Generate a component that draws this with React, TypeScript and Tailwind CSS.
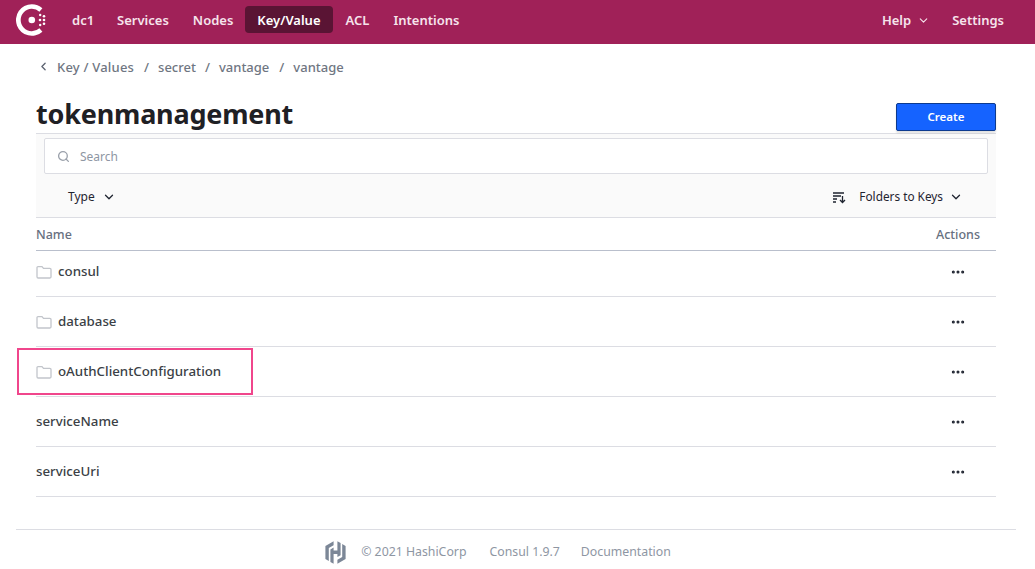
import { ChevronDown, ChevronLeft, Ellipsis, Search } from "lucide-react";

const font = { fontFamily: '"Noto Sans", "Open Sans", sans-serif' };

function ConsulLogo() {
    return (
        <svg width="33" height="32" viewBox="0 0 33 32" fill="#fff">
            <path d="M15.8 0.2a15.8 15.8 0 0 1 10.6 4.1l-3 3.4a11.2 11.2 0 1 0 0 16.6l3 3.4a15.8 15.8 0 1 1-10.6-27.5z" />
            <circle cx="15.8" cy="16" r="3.3" />
            <circle cx="24" cy="16" r="1.3" />
            <circle cx="28" cy="12.2" r="1.3" />
            <circle cx="28" cy="16" r="1.3" />
            <circle cx="28" cy="19.8" r="1.3" />
            <circle cx="24.2" cy="11" r="1.2" />
            <circle cx="24.2" cy="21" r="1.2" />
        </svg>
    );
}

function FolderIcon() {
    return (
        <svg width="16" height="14" viewBox="0 0 16 14" fill="none" stroke="#c2c5cb" strokeWidth="1.3" className="shrink-0">
            <path d="M1 3V11.8A1.2 1.2 0 0 0 2.2 13H13.8A1.2 1.2 0 0 0 15 11.8V4.6A1.2 1.2 0 0 0 13.8 3.4H7.5L6 1.6H2A1 1 0 0 0 1 2.6Z" />
        </svg>
    );
}

function HashiLogo() {
    return (
        <svg width="21" height="23" viewBox="0 0 21 23" fill="#7c8797">
            <path d="M8.6 0.3 0.4 5v13l3.4 2V7l4.8-2.8Z" />
            <path d="M12.4 0.3V9.6H8.6V6.6L5.4 8.4V21l3.2 1.7V12.9h3.8V16l3.2-1.8V1.9Z" />
            <path d="M12.4 22.7l8.2-4.7V5l-3.4-2v13l-4.8 2.8Z" />
        </svg>
    );
}

function NavItem({ label, active, className = "" }: { label: string; active?: boolean; className?: string }) {
    return (
        <a className={(active ? "bg-[#5a1434] text-white rounded-[4px] " : "text-[#f6e4ec] ") + "px-[12px] pt-[3px] h-[27px] flex items-center " + className}>
            {label}
        </a>
    );
}

function Row({ name, folder, first }: { name: string; folder?: boolean; first?: boolean }) {
    return (
        <div className={(first ? "h-[46px] pb-[3px] " : "h-[50px] pt-[1px] ") + "flex items-center justify-between border-b border-[#dcdde3] text-[13.3px] font-medium text-[#3b3f46]"}>
            <div className="flex items-center gap-[6px]">
                {folder && <FolderIcon />}
                <span>{name}</span>
            </div>
            <Ellipsis size={16} strokeWidth={2.6} className="mr-[30px] text-[#1f2430]" />
        </div>
    );
}

export default function App() {
    return (
        <div className="relative w-[1035px] h-[569px] overflow-hidden bg-white" style={font}>
            <header className="h-[44px] bg-[#a02158] flex items-center justify-between pl-[16px] pr-[31px] pb-[5px] text-[13px] font-semibold">
                <div className="flex items-center">
                    <ConsulLogo />
                    <nav className="flex items-center ml-[10px]">
                        <NavItem label="dc1" className="ml-[1px] mr-[-1px]" />
                        <NavItem label="Services" />
                        <NavItem label="Nodes" />
                        <NavItem label="Key/Value" active className="mr-[1px]" />
                        <NavItem label="ACL" />
                        <NavItem label="Intentions" />
                    </nav>
                </div>
                <div className="flex items-center gap-[22px] pt-[2px] text-[#f6e4ec]">
                    <div className="flex items-center gap-[6px]">
                        <span>Help</span>
                        <ChevronDown size={13} />
                    </div>
                    <span>Settings</span>
                </div>
            </header>

            <main className="ml-[36px] mr-[39px]">
                <div className="h-[47px] flex items-center text-[13px] font-medium text-[#6f7682]">
                    <ChevronLeft size={13} strokeWidth={2.4} className="ml-[1px] mb-[2px] text-[#5b6270]" />
                    <span className="ml-[7px] tracking-[0.2px]">Key / Values</span>
                    <span className="ml-[10px]">/</span>
                    <span className="ml-[9px]">secret</span>
                    <span className="ml-[9px]">/</span>
                    <span className="ml-[9px]">vantage</span>
                    <span className="ml-[10px]">/</span>
                    <span className="ml-[9px]">vantage</span>
                </div>

                <div className="h-[43px] flex items-end justify-between border-b border-[#dcdde3]">
                    <h1 className="text-[27px] leading-[38px] font-bold text-[#1f2024] tracking-[-0.2px]">tokenmanagement</h1>
                    <button className="w-[100px] h-[28px] mb-[2px] rounded-[2px] bg-[#1563ff] border border-[#0c3a8f] text-white text-[11.5px] font-semibold shadow-[0_2px_2px_rgba(0,0,0,0.12)]">
                        Create
                    </button>
                </div>

                <div className="bg-[#fafafa] border-b border-[#dcdde3] h-[84px] px-[8px] pt-[4px]">
                    <div className="h-[36px] bg-white border border-[#dcdde3] rounded-[2px] flex items-center pl-[12px]">
                        <Search size={13} strokeWidth={2.4} className="text-[#9aa0aa]" />
                        <span className="ml-[10px] pt-[1px] text-[12px] text-[#8e96a3]">Search</span>
                    </div>
                    <div className="h-[44px] pt-[1px] flex items-center justify-between pl-[24px] pr-[25px] text-[12px] text-[#1f2430]">
                        <div className="flex items-center gap-[7px]">
                            <span>Type</span>
                            <ChevronDown size={14} strokeWidth={2.2} />
                        </div>
                        <div className="flex items-center">
                            <svg width="14" height="14" viewBox="0 0 14 14" fill="none" stroke="#1f2430" strokeWidth="1.3">
                                <path d="M1 3H12M1 6H9M1 9H5M1 12H4" />
                                <path d="M10.5 6V12.5M8 10L10.5 12.5L13 10" />
                            </svg>
                            <span className="ml-[13px] text-[11.8px]">Folders to Keys</span>
                            <ChevronDown size={14} strokeWidth={2.2} className="ml-[6px]" />
                        </div>
                    </div>
                </div>

                <div className="h-[33px] pt-[3px] flex items-center justify-between border-b border-[#b9bfcc] text-[12.5px] font-medium text-[#677080]">
                    <span>Name</span>
                    <span className="mr-[16px]">Actions</span>
                </div>

                <Row name="consul" folder first />
                <Row name="database" folder />
                <Row name="oAuthClientConfiguration" folder />
                <Row name="serviceName" />
                <Row name="serviceUri" />
            </main>

            <footer className="ml-[16px] mr-[19px] mt-[32px] pr-[36px] pt-[2px] border-t border-[#dcdde3] h-[44px] flex items-center justify-center text-[12.3px] text-[#8e96a3]">
                <HashiLogo />
                <span className="ml-[15px]">© 2021 HashiCorp</span>
                <span className="ml-[23px]">Consul 1.9.7</span>
                <span className="ml-[21px]">Documentation</span>
            </footer>

            <div className="absolute left-[17px] top-[348px] w-[236px] h-[47px] border-2 border-[#f0468c]" />
        </div>
    );
}
